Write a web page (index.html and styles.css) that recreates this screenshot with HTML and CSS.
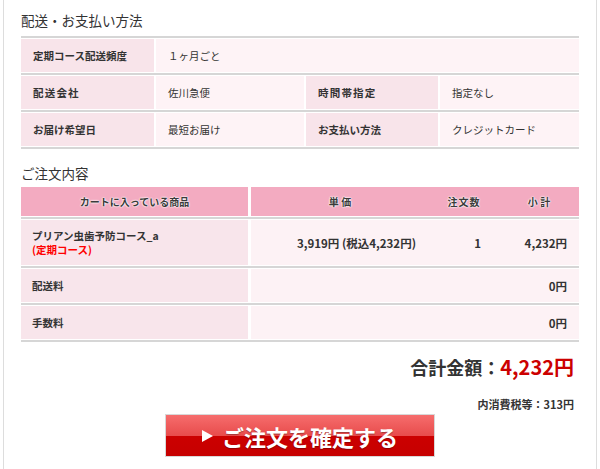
FILE: index.html
```html
<!DOCTYPE html>
<html lang="ja">

<head>
    <meta charset="UTF-8">
    <meta name="viewport" content="width=device-width, initial-scale=1.0">
    <title>ご注文内容の確認</title>
    <link rel="stylesheet" href="styles.css">
</head>

<body>
    <div class="wrap">
        <h4 class="ttl">配送・お支払い方法</h4>
        <div class="info">
            <div class="row">
                <div class="th">定期コース配送頻度</div>
                <div class="td">１ヶ月ごと</div>
            </div>
            <div class="row">
                <div class="th sp">配送会社</div>
                <div class="td mid">佐川急便</div>
                <div class="th th2 sp">時間帯指定</div>
                <div class="td">指定なし</div>
            </div>
            <div class="row">
                <div class="th">お届け希望日</div>
                <div class="td mid">最短お届け</div>
                <div class="th th2">お支払い方法</div>
                <div class="td">クレジットカード</div>
            </div>
        </div>

        <h4 class="ttl ttl2">ご注文内容</h4>
        <div class="cart">
            <div class="ch">
                <div class="item">カートに入っている商品</div>
                <div class="rest">
                    <span class="price">単 価</span>
                    <span class="qty">注文数</span>
                    <span class="sub">小 計</span>
                </div>
            </div>
            <div class="cr big">
                <div class="item">
                    <p>プリアン虫歯予防コース_a</p>
                    <p class="red">(定期コース)</p>
                </div>
                <div class="rest">
                    <span class="price">3,919円 (税込4,232円)</span>
                    <span class="qty">1</span>
                    <span class="sub">4,232円</span>
                </div>
            </div>
            <div class="cr">
                <div class="item">配送料</div>
                <div class="rest end">0円</div>
            </div>
            <div class="cr">
                <div class="item">手数料</div>
                <div class="rest end">0円</div>
            </div>
        </div>

        <div class="total">合計金額：<span>4,232円</span></div>
        <div class="tax">内消費税等：313円</div>

        <button class="btn" type="submit"><i class="arw"></i>ご注文を確定する</button>
    </div>
</body>

</html>
```

FILE: styles.css
```css
html {
    height: 100%;
}

body {
    margin: 0;
    height: 100%;
    font-family: "Noto Sans CJK JP", "Liberation Sans", sans-serif;
    color: #333;
}

.wrap {
    box-sizing: border-box;
    min-height: 100%;
    margin: 0 3px;
    padding: 9px 17px 13px;
    border-left: 1px solid #ddd;
    border-right: 1px solid #ddd;
}

.ttl {
    margin: 0 0 5px;
    font-size: 13.5px;
    font-weight: normal;
    line-height: 22px;
}

.ttl2 {
    margin: 13px 0 3px;
}

/* 配送・お支払い */
.info {
    border-top: 2px solid #d6d6d6;
}

.row {
    display: flex;
    gap: 2px;
    padding: 1px 0;
    border-bottom: 2px solid #d6d6d6;
}

.th,
.td {
    box-sizing: border-box;
    height: 33px;
    display: flex;
    align-items: center;
    padding-left: 12px;
    font-size: 10.5px;
}

.th {
    width: 133px;
    font-weight: bold;
    background-color: #f8e4ea;
}

.th2 {
    width: 132px;
}

.sp {
    letter-spacing: 1.2px;
}

.td {
    flex: 1;
    background-color: #fef3f6;
}

.td.mid {
    flex: none;
    width: 148px;
}

/* ご注文内容 */
.ch,
.cr {
    display: flex;
    gap: 3px;
    border-bottom: 2px solid #d6d6d6;
}

.ch {
    padding-bottom: 1px;
}

.cr {
    padding: 1px 0;
}

.item {
    box-sizing: border-box;
    width: 227px;
    display: flex;
    flex-direction: column;
    justify-content: center;
    padding-left: 11px;
    font-size: 10.5px;
    font-weight: bold;
    background-color: #f8e5eb;
}

.item p {
    margin: 0;
    line-height: 14px;
}

.red {
    color: #f00;
}

.rest {
    flex: 1;
    display: flex;
    align-items: center;
    font-size: 11.5px;
    font-weight: bold;
    background-color: #fdf2f5;
}

.price {
    width: 178px;
    padding-right: 13px;
    box-sizing: border-box;
    text-align: right;
}

.qty {
    width: 70px;
    padding-right: 18px;
    box-sizing: border-box;
    text-align: right;
}

.sub {
    flex: 1;
    padding-right: 12px;
    text-align: right;
}

.ch>div {
    height: 29px;
    background-color: #f3abc1;
    color: #3a3a3a;
    font-size: 10px;
    font-weight: bold;
    text-shadow: 0 0 2px #fff, 0 0 2px #fff, 0 0 1px #fff;
}

.ch .item {
    align-items: center;
    padding-left: 0;
}

.ch span {
    text-align: center;
    padding-right: 0;
}

.ch .qty {
    letter-spacing: 1px;
}

.cr>div {
    min-height: 33px;
}

.cr.big>div {
    height: 45px;
}

.rest.end {
    justify-content: flex-end;
    padding-right: 12px;
}

/* 合計 */
.total {
    margin-top: 12px;
    padding-right: 5px;
    text-align: right;
    font-size: 18px;
    font-weight: bold;
    line-height: 26px;
}

.total span {
    color: #c00;
    font-size: 20px;
}

.tax {
    margin-top: 16px;
    padding-right: 5px;
    text-align: right;
    font-size: 11px;
    font-weight: bold;
    line-height: 16px;
}

.btn {
    display: flex;
    align-items: center;
    justify-content: center;
    gap: 9px;
    width: 270px;
    height: 43px;
    margin: 2px auto 0;
    padding: 0;
    border: 1px solid #d8d8d8;
    background: linear-gradient(#f66d6d 0, #e84c4c 50%, #cc0000 50%, #c60000 100%);
    color: #fff;
    font-family: inherit;
    font-size: 22px;
    font-weight: bold;
    text-shadow: 0 1px 1px rgba(0, 0, 0, .3);
    cursor: pointer;
}

.arw {
    width: 0;
    height: 0;
    border-left: 11px solid #fff;
    border-top: 6px solid transparent;
    border-bottom: 6px solid transparent;
}
```
